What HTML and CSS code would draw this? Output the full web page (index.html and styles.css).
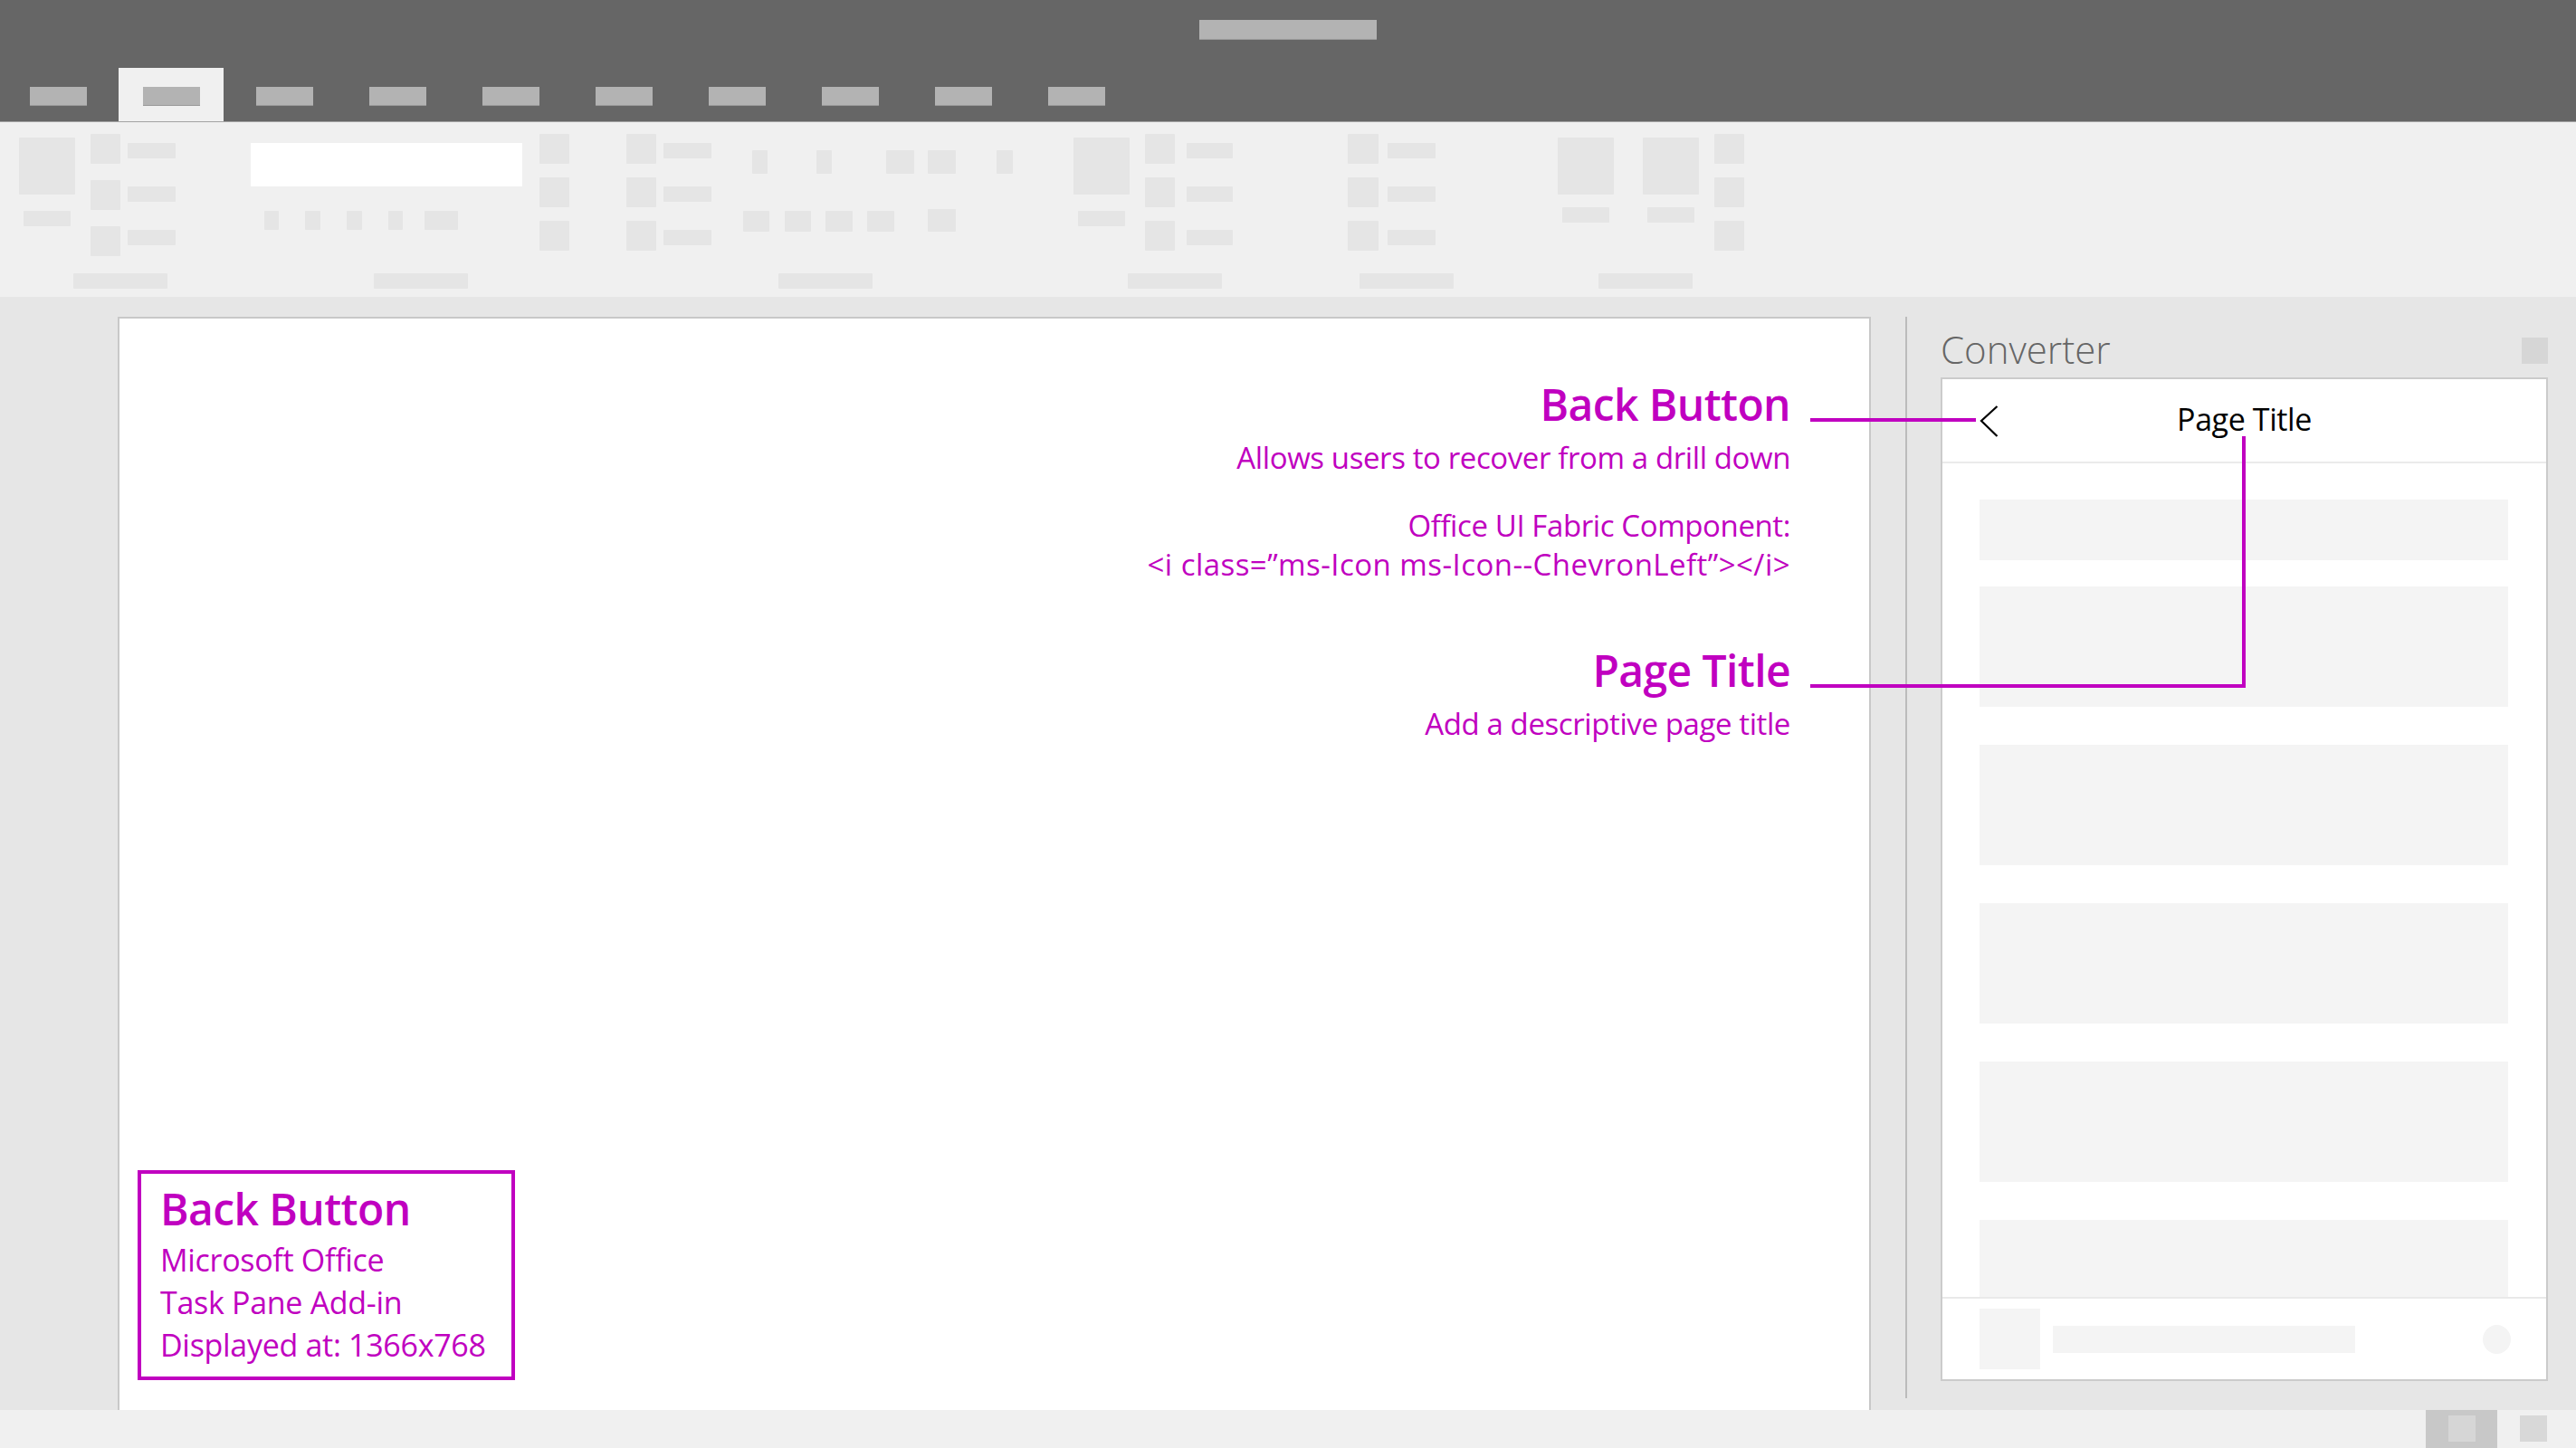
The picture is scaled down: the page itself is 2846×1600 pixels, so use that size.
FILE: index.html
```html
<!DOCTYPE html>
<html lang="en">
<head>
<meta charset="utf-8">
<title>Back Button - Task Pane Add-in</title>
<link rel="stylesheet" href="styles.css">
</head>
<body>
<div class="app">
  <header class="titlebar">
    <div class="doc-title"></div>
    <nav class="tabs">
      <div class="tab"><span></span></div>
      <div class="tab active"><span></span></div>
      <div class="tab"><span></span></div>
      <div class="tab"><span></span></div>
      <div class="tab"><span></span></div>
      <div class="tab"><span></span></div>
      <div class="tab"><span></span></div>
      <div class="tab"><span></span></div>
      <div class="tab"><span></span></div>
      <div class="tab"><span></span></div>
    </nav>
  </header>

  <section class="ribbon">
    <div class="ribbon-top">
      <div class="rb-big c1"><i class="big"></i><i class="lbl"></i></div>
      <div class="rb-col c2 loose"><i></i><i></i><i></i></div>
      <div class="rb-rects c3"><i></i><i></i><i></i></div>
      <div class="rb-box c4">
        <div class="white"></div>
        <div class="mini-row">
          <i class="m1"></i><i class="m2"></i><i class="m3"></i><i class="m4"></i><i class="m5"></i>
        </div>
      </div>
      <div class="rb-col c5"><i></i><i></i><i></i></div>
      <div class="rb-col c6"><i></i><i></i><i></i></div>
      <div class="rb-rects c7"><i></i><i></i><i></i></div>
      <div class="rb-grid c8">
        <div class="g-top">
          <i class="t1"></i><i class="t2"></i><i class="t3"></i><i class="t4"></i><i class="t5"></i>
        </div>
        <div class="g-bot">
          <i class="b1"></i><i class="b2"></i><i class="b3"></i><i class="b4"></i><i class="b5"></i>
        </div>
      </div>
      <div class="rb-big c9"><i class="big"></i><i class="lbl"></i></div>
      <div class="rb-col c10"><i></i><i></i><i></i></div>
      <div class="rb-rects c11"><i></i><i></i><i></i></div>
      <div class="rb-col c12"><i></i><i></i><i></i></div>
      <div class="rb-rects c13"><i></i><i></i><i></i></div>
      <div class="rb-big c14 high"><i class="big"></i><i class="lbl"></i></div>
      <div class="rb-big c15 high"><i class="big"></i><i class="lbl"></i></div>
      <div class="rb-col c16"><i></i><i></i><i></i></div>
    </div>
    <div class="ribbon-labels">
      <i class="l1"></i><i class="l2"></i><i class="l3"></i><i class="l4"></i><i class="l5"></i><i class="l6"></i>
    </div>
  </section>

  <main class="workspace">
    <article class="document">
      <div class="notes">
        <h2 class="note-head">Back Button</h2>
        <p class="note-line first">Allows users to recover from a drill down</p>
        <p class="note-line gap">Office UI Fabric Component:</p>
        <p class="note-line code">&lt;i class=&rdquo;ms-Icon ms-Icon--ChevronLeft&rdquo;&gt;&lt;/i&gt;</p>
        <h2 class="note-head second">Page Title</h2>
        <p class="note-line first">Add a descriptive page title</p>
      </div>
      <div class="info-box">
        <h2 class="info-head">Back Button</h2>
        <p class="info-line first">Microsoft Office</p>
        <p class="info-line">Task Pane Add-in</p>
        <p class="info-line">Displayed at: 1366x768</p>
      </div>
    </article>

    <div class="pane-sep"></div>

    <aside class="taskpane">
      <div class="pane-header">
        <span class="pane-title">Converter</span>
        <span class="pane-close"></span>
      </div>
      <div class="card">
        <div class="card-header">
          <svg class="chevron" width="22" height="36" viewBox="0 0 22 36" aria-hidden="true">
            <polyline points="20.5,2 3,18 20.5,35" fill="none" stroke="#000" stroke-width="2.2"/>
          </svg>
          <span class="page-title">Page Title</span>
          <span></span>
        </div>
        <div class="card-body">
          <div class="blk b-first"></div>
          <div class="blk"></div>
          <div class="blk"></div>
          <div class="blk"></div>
          <div class="blk"></div>
          <div class="blk"></div>
        </div>
        <div class="card-footer">
          <div class="f-square"></div>
          <div class="f-bar"></div>
          <div class="f-dot"></div>
        </div>
      </div>
    </aside>
  </main>

  <footer class="statusbar">
    <div class="sb-btn active"><span></span></div>
    <div class="sb-btn"><span></span></div>
  </footer>

  <svg class="callouts" width="2846" height="1600" viewBox="0 0 2846 1600" aria-hidden="true">
    <rect x="2000" y="462" width="183" height="4" fill="#c000c0"/>
    <rect x="2000" y="756" width="481" height="4" fill="#c000c0"/>
    <rect x="2477" y="482" width="4" height="278" fill="#c000c0"/>
  </svg>
</div>
</body>
</html>
```

FILE: styles.css
```css
* { box-sizing: border-box; }

html, body {
  margin: 0;
  padding: 0;
}

body {
  width: 2846px;
  height: 1600px;
  overflow: hidden;
  background: #e6e6e6;
  font-family: "Segoe UI", "Open Sans", "Noto Sans", sans-serif;
}

.app {
  position: relative;
  width: 2846px;
  height: 1600px;
  display: flex;
  flex-direction: column;
}

/* ---------- Title bar ---------- */
.titlebar {
  height: 135px;
  background: #666666;
  border-bottom: 1px solid #a3a3a3;
  display: flex;
  flex-direction: column;
  align-items: center;
  flex-shrink: 0;
}

.doc-title {
  width: 196px;
  height: 22px;
  margin-top: 22px;
  background: #b3b3b3;
  border-bottom: 1px solid #9c9c9c;
}

.tabs {
  align-self: stretch;
  display: flex;
  gap: 9px;
  padding-left: 6px;
  margin-top: 31px;
  height: 59px;
}

.tab {
  width: 116px;
  display: flex;
  justify-content: center;
}

.tab span {
  display: block;
  width: 63px;
  height: 21px;
  margin-top: 21px;
  background: #b3b3b3;
  border-bottom: 1px solid #9a9a9a;
}

.tab.active { background: #f0f0f0; }

/* ---------- Ribbon ---------- */
.ribbon {
  height: 193px;
  background: #f0f0f0;
  flex-shrink: 0;
  display: flex;
  flex-direction: column;
}

.ribbon-top {
  height: 167px;
  display: flex;
  align-items: flex-start;
}

.ribbon i {
  display: block;
  background: #e5e5e5;
  border-radius: 1px;
}

.rb-big {
  width: 62px;
  display: flex;
  flex-direction: column;
  align-items: center;
}
.rb-big .big { width: 62px; height: 63px; margin-top: 17px; }
.rb-big .lbl { width: 52px; height: 17px; margin-top: 18px; }
.rb-big.high .lbl { margin-top: 14px; }

.rb-col {
  width: 33px;
  display: flex;
  flex-direction: column;
  gap: 15px;
  padding-top: 13px;
}
.rb-col i { width: 33px; height: 33px; }
.rb-col.loose { gap: 18px; }

.rb-rects {
  width: 53px;
  display: flex;
  flex-direction: column;
  gap: 31px;
  padding-top: 23px;
}
.rb-rects i { width: 53px; height: 17px; }

.rb-box {
  width: 300px;
  display: flex;
  flex-direction: column;
}
.rb-box .white {
  width: 300px;
  height: 48px;
  margin-top: 23px;
  background: #ffffff;
}
.mini-row {
  display: flex;
  margin-top: 27px;
}
.mini-row i { height: 21px; }
.mini-row .m1 { width: 16px; margin-left: 15px; }
.mini-row .m2 { width: 17px; margin-left: 29px; }
.mini-row .m3 { width: 17px; margin-left: 29px; }
.mini-row .m4 { width: 16px; margin-left: 29px; }
.mini-row .m5 { width: 37px; margin-left: 24px; }

.rb-grid {
  width: 298px;
  display: flex;
  flex-direction: column;
}
.g-top {
  display: flex;
  margin-top: 31px;
}
.g-top i { height: 26px; }
.g-top .t1 { width: 17px; margin-left: 10px; }
.g-top .t2 { width: 17px; margin-left: 54px; }
.g-top .t3 { width: 31px; margin-left: 60px; }
.g-top .t4 { width: 31px; margin-left: 15px; }
.g-top .t5 { width: 18px; margin-left: 45px; }
.g-bot {
  display: flex;
  align-items: flex-end;
  margin-top: 39px;
}
.g-bot i { height: 23px; }
.g-bot .b1 { width: 29px; }
.g-bot .b2 { width: 29px; margin-left: 17px; }
.g-bot .b3 { width: 30px; margin-left: 16px; }
.g-bot .b4 { width: 30px; margin-left: 16px; }
.g-bot .b5 { width: 31px; height: 25px; margin-left: 37px; }

/* column offsets */
.c1 { margin-left: 21px; }
.c2 { margin-left: 17px; }
.c3 { margin-left: 8px; }
.c4 { margin-left: 83px; }
.c5 { margin-left: 19px; }
.c6 { margin-left: 63px; }
.c7 { margin-left: 8px; }
.c8 { margin-left: 35px; }
.c9 { margin-left: 67px; }
.c10 { margin-left: 17px; }
.c11 { margin-left: 13px; width: 51px; }
.c11 i { width: 51px; }
.c12 { margin-left: 127px; width: 34px; }
.c12 i { width: 34px; }
.c13 { margin-left: 10px; }
.c14 { margin-left: 135px; }
.c15 { margin-left: 32px; }
.c16 { margin-left: 17px; }

.ribbon-labels {
  display: flex;
}
.ribbon-labels i { width: 104px; height: 17px; }
.ribbon-labels .l1 { margin-left: 81px; }
.ribbon-labels .l2 { margin-left: 228px; }
.ribbon-labels .l3 { margin-left: 343px; }
.ribbon-labels .l4 { margin-left: 282px; }
.ribbon-labels .l5 { margin-left: 152px; }
.ribbon-labels .l6 { margin-left: 160px; }

/* ---------- Workspace ---------- */
.workspace {
  height: 1230px;
  display: flex;
  align-items: stretch;
  background: #e6e6e6;
  flex-shrink: 0;
}

.document {
  width: 1937px;
  margin-left: 130px;
  margin-top: 22px;
  background: #ffffff;
  border: 2px solid #c8c8c8;
  border-bottom: none;
  display: flex;
  flex-direction: column;
  color: #c000c0;
}

.notes {
  text-align: right;
  padding-top: 65px;
  padding-right: 87px;
}

.note-head {
  margin: 0;
  font-size: 48px;
  line-height: 60px;
  font-weight: 600;
  letter-spacing: -0.6px;
}
.note-head.second { margin-top: 66px; }

.note-line {
  margin: 0;
  font-size: 33px;
  line-height: 43px;
  font-weight: 400;
  letter-spacing: -0.4px;
}
.note-line.first { margin-top: 7px; }
.note-line.gap { margin-top: 32px; }
.note-line.code { letter-spacing: 0.45px; }

.info-box {
  margin-top: auto;
  margin-left: 20px;
  margin-bottom: 33px;
  width: 417px;
  height: 232px;
  border: 4px solid #c000c0;
  padding: 9px 0 0 21px;
}

.info-head {
  margin: 0;
  font-size: 48px;
  line-height: 60px;
  font-weight: 600;
  letter-spacing: -0.6px;
}

.info-line {
  margin: 0;
  font-size: 34px;
  line-height: 47px;
  letter-spacing: -0.3px;
}
.info-line.first { margin-top: 3px; }

.pane-sep {
  width: 2px;
  margin-left: 38px;
  margin-top: 22px;
  margin-bottom: 13px;
  background: #bcbcbc;
}

.taskpane {
  width: 671px;
  margin-left: 37px;
  display: flex;
  flex-direction: column;
}

.pane-header {
  height: 89px;
  display: flex;
  justify-content: space-between;
  align-items: flex-start;
  padding-top: 33px;
}

.pane-title {
  font-size: 42px;
  line-height: 50px;
  font-weight: 300;
  color: #666666;
}

.pane-close {
  width: 29px;
  height: 29px;
  margin-top: 12px;
  background: #d6d6d6;
}

.card {
  height: 1109px;
  background: #ffffff;
  border: 2px solid #cbcbcb;
  display: flex;
  flex-direction: column;
}

.card-header {
  height: 93px;
  flex-shrink: 0;
  border-bottom: 2px solid #ebebeb;
  display: grid;
  grid-template-columns: 1fr auto 1fr;
  align-items: center;
}

.chevron {
  display: block;
  margin-left: 40px;
}

.page-title {
  font-size: 34px;
  line-height: 44px;
  letter-spacing: -0.4px;
  color: #000000;
  margin-top: -3px;
}

.card-body {
  flex: 1;
  overflow: hidden;
  padding: 40px 42px 0 41px;
}

.blk {
  height: 133px;
  background: #f4f4f4;
  margin-bottom: 42px;
}
.blk.b-first {
  height: 67px;
  margin-bottom: 29px;
}

.card-footer {
  height: 91px;
  flex-shrink: 0;
  border-top: 2px solid #e9e9e9;
  display: flex;
  align-items: center;
  padding-left: 41px;
  padding-right: 39px;
}

.f-square {
  width: 67px;
  height: 67px;
  background: #f4f4f4;
}

.f-bar {
  width: 334px;
  height: 30px;
  margin-left: 14px;
  background: #f4f4f4;
}

.f-dot {
  width: 31px;
  height: 32px;
  margin-left: auto;
  border-radius: 50%;
  background: #f4f4f4;
}

/* ---------- Status bar ---------- */
.statusbar {
  height: 42px;
  background: #f0f0f0;
  display: flex;
  justify-content: flex-end;
  padding-right: 32px;
  flex-shrink: 0;
}

.sb-btn {
  display: flex;
  justify-content: center;
  margin-left: 25px;
}
.sb-btn span {
  display: block;
  width: 30px;
  height: 29px;
  margin-top: 6px;
  background: #d8d8d8;
}
.sb-btn.active {
  width: 79px;
  background: #c8c8c8;
}
.sb-btn.active span { background: #d6d6d6; }

/* ---------- Callout lines overlay ---------- */
.callouts {
  position: absolute;
  left: 0;
  top: 0;
  pointer-events: none;
}
```
